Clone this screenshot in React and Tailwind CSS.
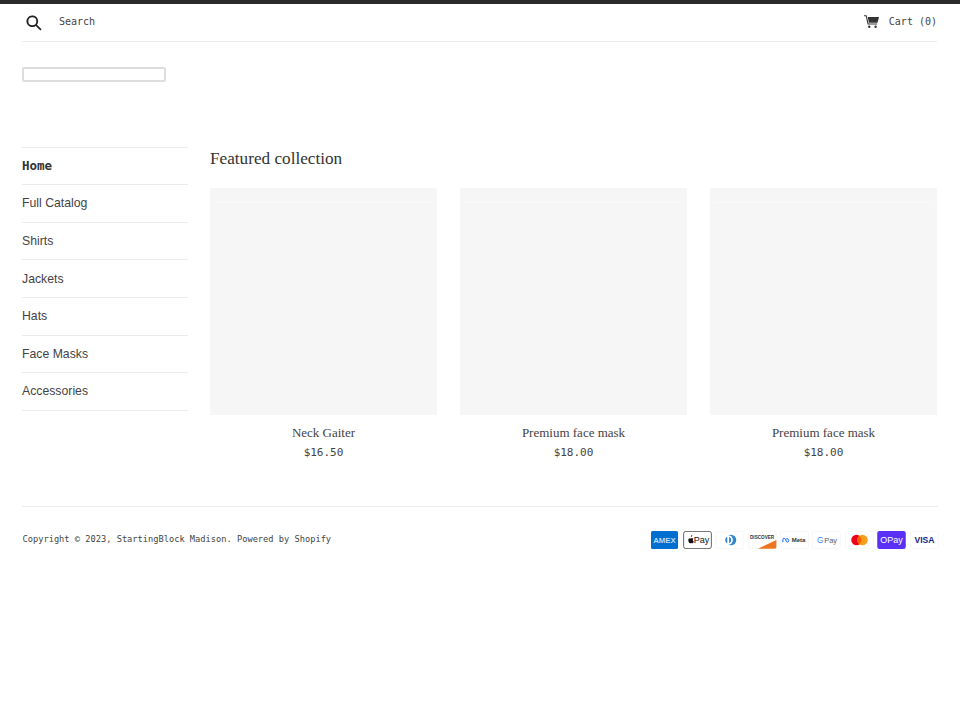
import React from 'react'

const mono = "font-['DejaVu_Sans_Mono',monospace]"
const serif = "font-['Liberation_Serif',serif]"
const sans = "font-['Liberation_Sans',sans-serif]"

const navItems = ['Home', 'Full Catalog', 'Shirts', 'Jackets', 'Hats', 'Face Masks', 'Accessories']

const products = [
  { title: 'Neck Gaiter', price: '$16.50' },
  { title: 'Premium face mask', price: '$18.00' },
  { title: 'Premium face mask', price: '$18.00' },
]

const Card = ({ children }) => (
  <svg viewBox="0 0 38 24" className="w-[29px] h-[18px]">{children}</svg>
)

const Outline = () => (
  <path fill="#fff" stroke="#000" strokeOpacity=".05" d="M35 .5H3A2.5 2.5 0 0 0 .5 3v18A2.5 2.5 0 0 0 3 23.5h32a2.5 2.5 0 0 0 2.5-2.5V3A2.5 2.5 0 0 0 35 .5z" />
)

const PaymentIcons = () => (
  <div className="flex gap-[3.4px] mr-[-0.5px]">
    <Card>
      <rect x="1" width="36" height="24" rx="2" fill="#016fd0" />
      <text x="19" y="15.5" textAnchor="middle" fontSize="9" fontWeight="700" textLength="30" lengthAdjust="spacingAndGlyphs" fill="#bcdcf4" fontFamily="Liberation Sans">AMEX</text>
    </Card>
    <Card>
      <rect x=".5" y=".5" width="37" height="23" rx="3" fill="#fff" stroke="#333" />
      <path fill="#111" d="M10.600 7.600c.5-.1 1-.5 1.200-1 .2-.5.2-1 .1-1.200-.6 0-1.100.4-1.400.8-.3.4-.5.9-.4 1.400zM12.700 11.900c0-1 .8-1.500.9-1.600-.5-.7-1.200-.8-1.500-.8-.7-.1-1.300.4-1.600.4-.4 0-.9-.4-1.500-.4-.8 0-1.500.5-1.900 1.200-.8 1.400-.2 3.500.6 4.600.4.5.8 1.200 1.400 1.100.6 0 .8-.4 1.500-.4s.9.4 1.500.4c.6 0 1-.5 1.400-1.100.4-.6.6-1.200.6-1.300 0 0-1.400-.5-1.400-2.100z" />
      <text x="24.500" y="16.500" textAnchor="middle" fontSize="12" fill="#111" fontFamily="Liberation Sans">Pay</text>
    </Card>
    <Card>
      <Outline />
      <circle cx="21" cy="12" r="7" fill="#3086c8" />
      <circle cx="17" cy="12" r="6.500" fill="#fff" />
      <path fill="#3086c8" d="M16 7.500a5 5 0 0 0 0 9zM18.500 7.500v9a5 5 0 0 0 0-9z" />
    </Card>
    <Card>
      <Outline />
      <path fill="#ee7623" d="M13 23.500 37.500 12v9a2.500 2.500 0 0 1-2.500 2.500z" />
      <text x="18.500" y="11" textAnchor="middle" fontSize="6.200" fontWeight="700" fill="#333" fontFamily="Liberation Sans">DISCOVER</text>
    </Card>
    <Card>
      <Outline />
      <path fill="none" stroke="#0866ff" strokeWidth="1.300" d="M3.500 15v-3.500c0-2.500 2.500-2.500 3.500 0l1 2c1 2 2.500 1.800 3 .3.500-1.500-.2-3.800-1.800-3.800-1.200 0-1.800 1.200-2.200 2" />
      <text x="24.500" y="15" textAnchor="middle" fontSize="8" fontWeight="700" fill="#333" fontFamily="Liberation Sans">Meta</text>
    </Card>
    <Card>
      <Outline />
      <text x="10.500" y="16" textAnchor="middle" fontSize="11" fill="#4285f4" fontFamily="Liberation Sans">G</text>
      <text x="24.500" y="16" textAnchor="middle" fontSize="10" fill="#5f6368" fontFamily="Liberation Sans">Pay</text>
    </Card>
    <Card>
      <Outline />
      <circle cx="15" cy="12" r="7" fill="#eb001b" />
      <circle cx="23" cy="12" r="7" fill="#f79e1b" />
      <path fill="#ff5f00" d="M19 6.500a7 7 0 0 0 0 11 7 7 0 0 0 0-11z" />
    </Card>
    <Card>
      <rect width="38" height="24" rx="3" fill="#5a31f4" />
      <text x="19" y="16.500" textAnchor="middle" fontSize="12" fill="#fff" fontFamily="Liberation Sans">OPay</text>
    </Card>
    <Card>
      <Outline />
      <text x="19" y="16.500" textAnchor="middle" fontSize="11.500" fontWeight="700" fill="#142688" fontFamily="Liberation Sans">VISA</text>
    </Card>
  </div>
)

const App = () => {
  return (
    <div className="min-h-screen bg-white text-[#444444]">
      <div className="h-1 bg-[#2b2b2b]" />
      <div className="pl-[22px] pr-[23px]">
        <header className="flex justify-between items-center h-[38px] border-b border-[#ebebeb]">
          <div className="flex items-center">
            <svg viewBox="0 0 20 20" className="w-[16px] h-[16px] ml-[4px] mt-[1px] text-[#222]" fill="currentColor">
              <path d="M18.800 17.300l-5.100-5.100a7.300 7.300 0 1 0-1.500 1.500l5.100 5.100a1.050 1.050 0 0 0 1.500-1.500zM2.900 7.900a5 5 0 1 1 10 0 5 5 0 0 1-10 0z" />
            </svg>
            <span className={`${mono} text-[10px] ml-[17px] mb-[2px]`}>Search</span>
          </div>
          <div className="flex items-center mb-[2px]">
            <svg viewBox="0 0 20 20" className="w-[15px] h-[15px] text-[#333]" fill="currentColor">
              <path d="M0 1.500h3.500L6 12.500h11.500v1.500H4.800L2.400 3H0z" />
              <path d="M5 4h15l-2 7.500H6.500z" />
              <circle cx="7" cy="17" r="1.600" />
              <circle cx="15.500" cy="17" r="1.600" />
            </svg>
            <span className={`${mono} text-[10px] ml-[10px]`}>Cart (0)</span>
          </div>
        </header>

        <div className="h-[105px] pt-[25px]">
          <div className="w-[144px] h-[15px] border-2 border-[#dddddd] rounded-[2px]" />
        </div>

        <div className="flex gap-[22px]">
          <nav className="w-[166px] shrink-0 mt-[-0.3px] border-t border-[#ebebeb]">
            {navItems.map((item, i) => (
              <div
                key={item}
                className={`h-[37.6px] flex items-center border-b border-[#ebebeb] ${
                  i === 0 ? `${mono} font-bold text-[12.5px] text-[#333]` : `${sans} text-[12.25px]`
                }`}
              >
                {item}
              </div>
            ))}
          </nav>

          <main className="flex-1">
            <h2 className={`${serif} text-[17.2px] leading-[21px] mt-[1px] text-[#333]`}>Featured collection</h2>
            <div className="grid grid-cols-3 gap-[23px] mt-[19px]">
              {products.map((p, i) => (
                <div key={i} className="text-center">
                  <div className="h-[227px] bg-[#f6f6f6] pt-[14px] px-[5px]">
                    <div className="h-px bg-[#fafafa]" />
                  </div>
                  <div className={`${serif} text-[13px] leading-[16px] mt-[10px]`}>{p.title}</div>
                  <div className={`${mono} text-[11px] leading-[14px] mt-[5px]`}>{p.price}</div>
                </div>
              ))}
            </div>
          </main>
        </div>

        <footer className="mt-[46px] mr-[-1px] border-t border-[#ebebeb] pt-[24px] flex justify-between items-center">
          <div className={`${mono} text-[8.7px] ml-[0.5px]`}>Copyright © 2023, StartingBlock Madison. Powered by Shopify</div>
          <PaymentIcons />
        </footer>
      </div>
    </div>
  )
}

export default App
